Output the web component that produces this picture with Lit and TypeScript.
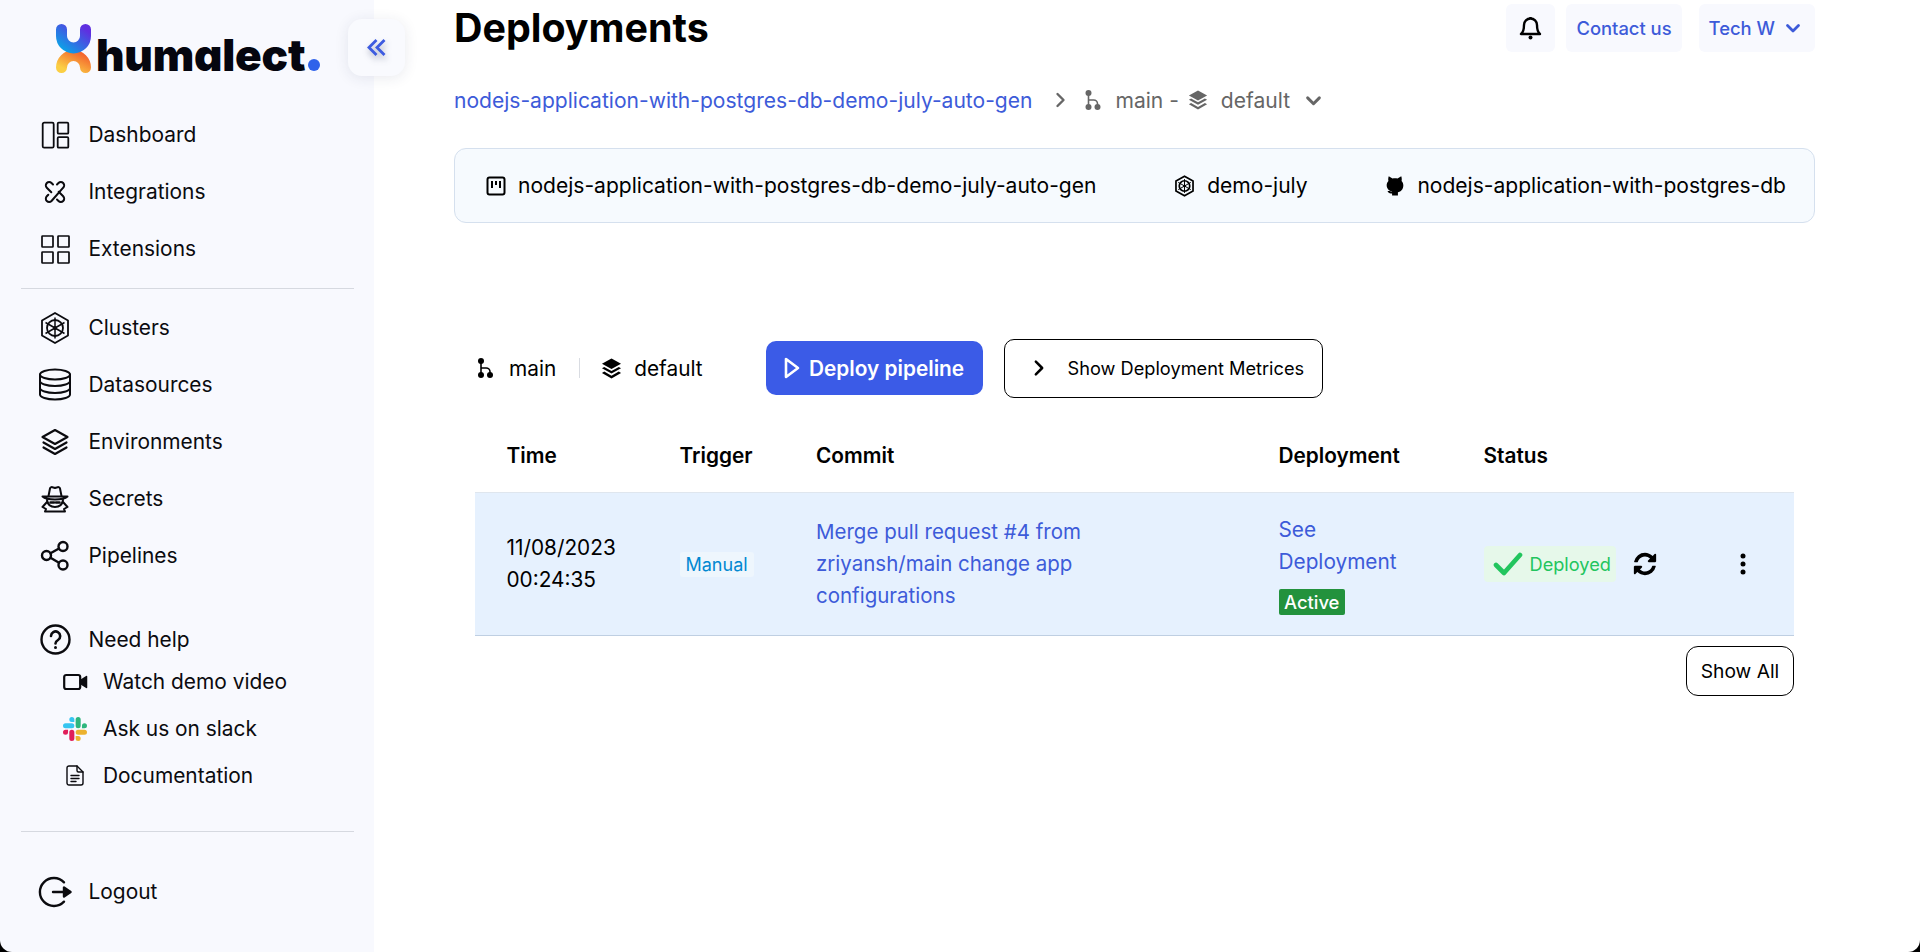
import { css, html, LitElement, svg } from "lit";
import { customElement } from "lit/decorators.js";

const stroke = (w: number, h: number, body: unknown, sw = 2) => html`<svg
    width=${w}
    height=${h}
    viewBox="0 0 ${w} ${h}"
    fill="none"
    stroke="currentColor"
    stroke-width=${sw}
    stroke-linecap="round"
    stroke-linejoin="round"
>
    ${body}
</svg>`;

const wheel = (sw: number) => svg`
    <path d="M16 1.5 29 9v15l-13 7.5L3 24V9z" stroke-width=${sw} />
    <circle cx="16" cy="16.5" r="8" stroke-width=${sw} />
    <circle cx="16" cy="16.5" r="2" fill="currentColor" stroke="none" />
    <path d="M16 6v21M6.5 11l19 11M25.5 11l-19 11" stroke-width="1.5" />`;

const branch = (w: number, h: number) => html`<svg width=${w} height=${h} viewBox="0 0 15 20" fill="currentColor">
    <circle cx="3" cy="3" r="3" />
    <circle cx="3" cy="17" r="3" />
    <circle cx="12" cy="17" r="3" />
    <path d="M2.2 3h1.6v6.2h4.4a4.6 4.6 0 0 1 4.6 4.6V17h-1.6v-3.2a3 3 0 0 0-3-3H3.8V17H2.2z" />
</svg>`;

const stackFilled = (w: number, h: number) => html`<svg width=${w} height=${h} viewBox="0 0 22 22" fill="currentColor">
    <path d="M11 .5 21 6l-10 5.5L1 6z" />
    <path d="M3.4 9.4 1 10.8l10 5.5 10-5.5-2.4-1.4-7.6 4.2z" />
    <path d="M3.4 14.2 1 15.6l10 5.9 10-5.9-2.4-1.4-7.6 4.4z" />
</svg>`;

const chevronDown = (w: number, color: string) => html`<svg
    width=${w}
    height=${w}
    viewBox="0 0 16 16"
    fill="none"
    stroke=${color}
    stroke-width="2.8"
    stroke-linecap="round"
    stroke-linejoin="round"
>
    <path d="m2.5 5.5 5.5 5.5 5.5-5.5" />
</svg>`;

const navIcons = {
    dashboard: stroke(
        30,
        28,
        svg`
        <rect x="2.7" y="1.7" width="11" height="25" rx="1.5" />
        <rect x="17.7" y="1.7" width="10.6" height="11" rx="1" />
        <rect x="17.7" y="16.2" width="10.6" height="10.5" rx="1" />`,
        1.8,
    ),
    integrations: stroke(
        24,
        24,
        svg`
        <path d="M10 4.5 8.5 3a3.3 3.3 0 0 0-4.7 4.7l4.5 4.5" />
        <path d="M14 19.5l1.5 1.5a3.3 3.3 0 0 0 4.7-4.7l-4.5-4.5" />
        <path d="M14 4.5 15.5 3a3.3 3.3 0 0 1 4.7 4.7L8.5 21a3.3 3.3 0 0 1-4.7-4.7l1.5-1.5" />`,
        2,
    ),
    extensions: stroke(
        30,
        30,
        svg`
        <rect x="2" y="2" width="11" height="11" rx=".5" />
        <rect x="18" y="2" width="11" height="11" rx=".5" />
        <rect x="2" y="18" width="11" height="11" rx=".5" />
        <rect x="18" y="18" width="11" height="11" rx=".5" />`,
        1.7,
    ),
    clusters: html`<svg width="32" height="36" viewBox="0 0 32 33" fill="none" stroke="currentColor" stroke-linejoin="round">
        ${wheel(1.8)}
    </svg>`,
    datasources: stroke(
        34,
        33,
        svg`
        <ellipse cx="17" cy="6.5" rx="15" ry="5" />
        <path d="M2 6.5v20c0 2.8 6.7 5 15 5s15-2.2 15-5v-20" />
        <path d="M2 13c0 2.8 6.7 5 15 5s15-2.2 15-5" />
        <path d="M2 20c0 2.8 6.7 5 15 5s15-2.2 15-5" />`,
    ),
    environments: stroke(
        30,
        28,
        svg`
        <path d="M15 2 27.5 9 15 16 2.5 9z" />
        <path d="M3.5 14.5 15 21l11.5-6.5" />
        <path d="M3.5 19.5 15 26l11.5-6.5" />`,
        2.2,
    ),
    secrets: stroke(
        30,
        28,
        svg`
        <path d="M8.5 11 10 3.5c.2-1 1.4-1.7 2.5-1.3l2.5.8 2.5-.8c1.1-.4 2.3.3 2.5 1.3l1.5 7.5" />
        <path d="M2.5 11.5h25c-2 1.8-6 3-12.5 3s-10.5-1.2-12.5-3z" />
        <path d="M7 15c.5 3 1.5 7 8 7s7.5-4 8-7" />
        <path d="M7 17 2.5 22l3.5 2-1 2.5h20l-1-2.5 3.5-2L23 17" />
        <path d="M10.5 17.5h3.5M16 17.5h3.5" stroke-width="2.5" />`,
    ),
    pipelines: stroke(
        30,
        31,
        svg`
        <circle cx="6.5" cy="15.5" r="4.5" />
        <circle cx="23" cy="6.5" r="4.5" />
        <circle cx="23" cy="25" r="4.5" />
        <path d="m10.5 13.3 8.500-4.800M10.5 17.7l8.500 5" />`,
        2.4,
    ),
    help: stroke(
        31,
        31,
        svg`
        <circle cx="15.5" cy="15.5" r="14" />
        <path d="M11 12a4.6 4.6 0 1 1 7 4c-1.7 1-2.5 1.8-2.5 3.5" stroke-width="2.6" />
        <circle cx="15.5" cy="23.5" r="1.5" fill="currentColor" stroke="none" />`,
        2.4,
    ),
    logout: stroke(
        34,
        32,
        svg`
        <path d="M26 6.3A14 14 0 1 0 26 25.7" />
        <path d="M15 16h17" />
        <path d="M32.5 16 26 11.5v9z" fill="currentColor" />`,
        2.4,
    ),
    video: stroke(
        25,
        18,
        svg`
        <rect x="1.2" y="2" width="16" height="14" rx="2" />
        <path d="M23.5 3.5v11l-6.300-4.200V7.700z" fill="currentColor" stroke-width="1.5" />`,
        2.2,
    ),
    slack: html`<svg width="24" height="24" viewBox="0 0 24 24">
        <path
            fill="#e01e5a"
            d="M5.042 15.165a2.528 2.528 0 0 1-2.52 2.523A2.528 2.528 0 0 1 0 15.165a2.527 2.527 0 0 1 2.522-2.52h2.52v2.52zM6.313 15.165a2.527 2.527 0 0 1 2.521-2.52 2.527 2.527 0 0 1 2.521 2.52v6.313A2.528 2.528 0 0 1 8.834 24a2.528 2.528 0 0 1-2.521-2.522v-6.313z"
        />
        <path
            fill="#36c5f0"
            d="M8.834 5.042a2.528 2.528 0 0 1-2.521-2.52A2.528 2.528 0 0 1 8.834 0a2.528 2.528 0 0 1 2.521 2.522v2.52H8.834zM8.834 6.313a2.528 2.528 0 0 1 2.521 2.521 2.528 2.528 0 0 1-2.521 2.521H2.522A2.528 2.528 0 0 1 0 8.834a2.528 2.528 0 0 1 2.522-2.521h6.312z"
        />
        <path
            fill="#2eb67d"
            d="M18.956 8.834a2.528 2.528 0 0 1 2.522-2.521A2.528 2.528 0 0 1 24 8.834a2.528 2.528 0 0 1-2.522 2.521h-2.522V8.834zM17.688 8.834a2.528 2.528 0 0 1-2.523 2.521 2.527 2.527 0 0 1-2.52-2.521V2.522A2.527 2.527 0 0 1 15.165 0a2.528 2.528 0 0 1 2.523 2.522v6.312z"
        />
        <path
            fill="#ecb22e"
            d="M15.165 18.956a2.528 2.528 0 0 1 2.523 2.522A2.528 2.528 0 0 1 15.165 24a2.527 2.527 0 0 1-2.52-2.522v-2.522h2.52zM15.165 17.688a2.527 2.527 0 0 1-2.52-2.523 2.526 2.526 0 0 1 2.52-2.52h6.313A2.527 2.527 0 0 1 24 15.165a2.528 2.528 0 0 1-2.522 2.523h-6.313z"
        />
    </svg>`,
    doc: stroke(
        18,
        21,
        svg`
        <path d="M3 1h8l6 6v11a2 2 0 0 1-2 2H3a2 2 0 0 1-2-2V3a2 2 0 0 1 2-2z" />
        <path d="M11 1v4.5a1.5 1.5 0 0 0 1.500 1.500H17" />
        <path d="M5 10.5h8M5 13.5h8M5 16.5h5" />`,
        1.4,
    ),
};

const mainNav = [
    { label: "Dashboard", icon: navIcons.dashboard },
    { label: "Integrations", icon: navIcons.integrations },
    { label: "Extensions", icon: navIcons.extensions },
];

const resourceNav = [
    { label: "Clusters", icon: navIcons.clusters },
    { label: "Datasources", icon: navIcons.datasources },
    { label: "Environments", icon: navIcons.environments },
    { label: "Secrets", icon: navIcons.secrets },
    { label: "Pipelines", icon: navIcons.pipelines },
];

const helpNav = [
    { label: "Watch demo video", icon: navIcons.video },
    { label: "Ask us on slack", icon: navIcons.slack },
    { label: "Documentation", icon: navIcons.doc },
];

@customElement("app-sidebar")
export class AppSidebar extends LitElement {
    static styles = css`
        :host {
            display: block;
            position: relative;
            width: 374px;
            flex: none;
            height: 952px;
            background: #f8f9fe;
            color: #0b0b0f;
            font-size: 20.9px;
            border-bottom-left-radius: 12px;
        }

        .brand {
            height: 106px;
            padding: 24px 0 0 56px;
            box-sizing: border-box;
            display: flex;
            align-items: flex-start;
        }

        .wordmark {
            display: flex;
            align-items: baseline;
            font-weight: 900;
            font-size: 44px;
            line-height: 49px;
            letter-spacing: -0.2px;
            margin: 7px 0 0 4px;
            color: #05060f;
            font-feature-settings: "cv11";
        }

        .dot {
            width: 12px;
            height: 12px;
            border-radius: 50%;
            background: #2f62ea;
            margin-left: 3px;
        }

        .collapse {
            position: absolute;
            left: 348px;
            top: 19px;
            width: 57px;
            height: 57px;
            border-radius: 14px;
            background: #f9fafe;
            box-shadow: 0 2px 14px rgba(40, 50, 90, 0.1);
            display: flex;
            align-items: center;
            justify-content: center;
            color: #3d5be0;
        }

        .collapse svg {
            filter: drop-shadow(1px 4px 3px rgba(40, 50, 90, 0.35));
        }

        .row {
            display: flex;
            align-items: center;
            height: 57px;
            padding-left: 36px;
            gap: 14.5px;
        }

        .icon {
            width: 38px;
            display: flex;
            justify-content: center;
            align-items: center;
        }

        .rule {
            height: 1px;
            background: #d6d9e0;
            margin: 0 20px 0 21px;
        }

        .rule.first {
            margin-top: 11px;
            margin-bottom: 10px;
        }

        .help {
            height: 37px;
            margin-top: 37px;
        }

        .sub {
            height: 47px;
            padding-left: 60px;
            gap: 13px;
        }

        .sub .icon {
            width: 30px;
        }

        .rule.second {
            margin-top: 32px;
            margin-bottom: 31px;
        }
    `;

    private row(item: { label: string; icon: unknown }, cls = "") {
        return html`<div class="row ${cls}">
            <span class="icon">${item.icon}</span><span>${item.label}</span>
        </div>`;
    }

    render() {
        return html`
            <div class="brand">
                <svg width="36" height="50" viewBox="56 24 36 50" fill="none" stroke-width="11" stroke-linecap="round">
                    <defs>
                        <linearGradient id="lo" x1="0" y1="1" x2="1" y2="0">
                            <stop offset="0" stop-color="#fbcf45" />
                            <stop offset="1" stop-color="#f4662e" />
                        </linearGradient>
                        <linearGradient id="lb" x1="0" y1="1" x2="1" y2="0">
                            <stop offset="0" stop-color="#0e9fe6" />
                            <stop offset="1" stop-color="#5f2fe0" />
                        </linearGradient>
                    </defs>
                    <path d="M61.5 67.5A12 12 0 0 1 85.5 67.5" stroke="url(#lo)" />
                    <path d="M61.5 29.5V36A12 12 0 0 0 85.5 36V29.5" stroke="url(#lb)" />
                </svg>
                <div class="wordmark">humalect<span class="dot"></span></div>
            </div>
            <div class="collapse">
                <svg width="22" height="22" viewBox="0 0 22 22" fill="none" stroke="currentColor" stroke-width="2.8">
                    <path d="M10.5 3 3 10.5l7.5 7.5" />
                    <path d="M18.5 3 11 10.5l7.5 7.5" />
                </svg>
            </div>
            ${mainNav.map((n) => this.row(n))}
            <div class="rule first"></div>
            ${resourceNav.map((n) => this.row(n))}
            ${this.row({ label: "Need help", icon: navIcons.help }, "help")}
            ${helpNav.map((n) => this.row(n, "sub"))}
            <div class="rule second"></div>
            ${this.row({ label: "Logout", icon: navIcons.logout })}
        `;
    }
}

@customElement("deploy-table")
export class DeployTable extends LitElement {
    static styles = css`
        :host {
            display: block;
            margin: 0 21px;
        }

        .head,
        .row {
            display: grid;
            grid-template-columns: 173px 136.5px 462.5px 205px 1fr;
            padding-left: 31.5px;
        }

        .head {
            height: 50px;
            align-items: center;
            margin: 32px 0 12px;
            font-weight: 600;
        }

        .row {
            height: 144px;
            box-sizing: border-box;
            align-items: center;
            background: #e6f1fe;
            border-top: 1px solid #dfe6ee;
            border-bottom: 1px solid #bfcfe2;
            line-height: 32px;
        }

        a {
            color: #3d5bd9;
            text-decoration: none;
        }

        .manual {
            justify-self: start;
            padding: 0 6px;
            height: 25px;
            line-height: 25px;
            font-size: 18px;
            background: #eef6fd;
            color: #0288d1;
            border-radius: 3px;
        }

        .commit {
            width: 310px;
            font-size: 20.5px;
        }

        .deployment {
            width: 150px;
        }

        .deployment a {
            display: block;
        }

        .active {
            display: block;
            width: fit-content;
            height: 26px;
            line-height: 26px;
            padding: 0 5.5px;
            margin-top: 11px;
            background: #23923d;
            color: #fff;
            font-size: 18.4px;
            font-weight: 500;
            border-radius: 2px;
        }

        .status {
            display: flex;
            align-items: center;
        }

        .badge {
            display: flex;
            align-items: center;
            gap: 7px;
            height: 36px;
            padding: 0 5px 0 9px;
            background: #e6f8ea;
            color: #22c55e;
            font-size: 18.2px;
            border-radius: 4px;
        }

        .sync {
            margin-left: 16px;
            color: #000;
            display: flex;
        }

        .kebab {
            margin-left: 82px;
            display: flex;
        }

        .foot {
            display: flex;
            justify-content: flex-end;
            margin-top: 10px;
        }

        .show-all {
            width: 108px;
            height: 50px;
            box-sizing: border-box;
            border: 1px solid #000;
            border-radius: 12px;
            background: #fff;
            font: inherit;
            font-size: 19.2px;
            color: #000;
            padding: 0;
        }
    `;

    render() {
        return html`
            <div class="head">
                <span>Time</span><span>Trigger</span><span>Commit</span><span>Deployment</span><span>Status</span>
            </div>
            <div class="row">
                <div>11/08/2023<br />00:24:35</div>
                <span class="manual">Manual</span>
                <a class="commit" href="#">Merge pull request #4 from zriyansh/main change app configurations</a>
                <div class="deployment">
                    <a href="#">See Deployment</a>
                    <span class="active">Active</span>
                </div>
                <div class="status">
                    <span class="badge">
                        <svg width="30" height="24" viewBox="0 0 30 24" fill="none" stroke="#22c55e" stroke-width="4.6" stroke-linecap="round" stroke-linejoin="round">
                            <path d="m3 13 8 8L27 3" />
                        </svg>
                        Deployed
                    </span>
                    <span class="sync">
                        <svg width="26" height="26" viewBox="0 0 1792 1792" fill="currentColor">
                            <path d="M1639 1056q0 5-1 7-64 268-268 434.5t-478 166.5q-146 0-282.5-55t-243.5-157l-129 129q-19 19-45 19t-45-19-19-45v-448q0-26 19-45t45-19h448q26 0 45 19t19 45-19 45l-137 137q71 66 161 102t187 36q134 0 250-65t186-179q11-17 53-117 8-23 30-23h192q13 0 22.5 9.5t9.5 22.5zm25-800v448q0 26-19 45t-45 19h-448q-26 0-45-19t-19-45 19-45l138-138q-148-137-349-137-134 0-250 65t-186 179q-11 17-53 117-8 23-30 23h-199q-13 0-22.5-9.5t-9.5-22.5v-7q65-268 270-434.5t480-166.5q146 0 284 55.5t245 156.5l130-129q19-19 45-19t45 19 19 45z" />
                        </svg>
                    </span>
                    <span class="kebab">
                        <svg width="6" height="24" viewBox="0 0 6 24" fill="#000">
                            <circle cx="3" cy="4" r="2.5" />
                            <circle cx="3" cy="12" r="2.5" />
                            <circle cx="3" cy="20" r="2.5" />
                        </svg>
                    </span>
                </div>
            </div>
            <div class="foot"><button class="show-all">Show All</button></div>
        `;
    }
}

@customElement("app-root")
export class AppRoot extends LitElement {
    static styles = css`
        :host {
            display: flex;
            height: 952px;
            overflow: hidden;
            background: #000;
            font-family: Inter, "Liberation Sans", sans-serif;
            font-size: 20.8px;
            color: #000;
        }

        main {
            flex: 1;
            min-width: 0;
            padding: 0 105px 0 80px;
            background: #fff;
            border-bottom-right-radius: 12px;
        }

        header {
            display: flex;
            height: 56px;
            justify-content: space-between;
            align-items: flex-start;
        }

        h1 {
            margin: 0;
            font-size: 39.4px;
            line-height: 56px;
            font-weight: 700;
        }

        .top-actions {
            display: flex;
            gap: 11px;
            margin-top: 4px;
        }

        .pill {
            height: 48px;
            display: flex;
            align-items: center;
            padding: 0 10px;
            background: #f8f9fe;
            border-radius: 6px;
            font-size: 18.4px;
            font-weight: 500;
            color: #3d5bd9;
            gap: 10px;
        }

        .pill.bell {
            padding: 0 13px;
            color: #000;
        }

        .pill.user {
            margin-left: 6px;
            padding-right: 14px;
        }

        .crumbs {
            display: flex;
            align-items: center;
            height: 32px;
            margin-top: 28px;
            font-size: 21.05px;
            color: #666;
        }

        .crumbs a {
            color: #3d5bd9;
            text-decoration: none;
        }

        .crumbs .sep {
            margin: 0 19px 0 23px;
            display: flex;
        }

        .crumbs .main-txt {
            margin: 0 9px 0 14px;
        }

        .crumbs .default-txt {
            margin: 0 15px 0 13px;
        }

        .info {
            display: flex;
            align-items: center;
            height: 75px;
            box-sizing: border-box;
            margin-top: 32px;
            padding: 0 28px 0 31px;
            background: #f6fafe;
            border: 1px solid #d5e0ee;
            border-radius: 12px;
            justify-content: space-between;
            font-size: 21.05px;
        }

        .info > div {
            display: flex;
            align-items: center;
            gap: 12px;
        }

        .toolbar {
            display: flex;
            align-items: center;
            height: 60px;
            margin: 115px 21px 0;
            padding-left: 3px;
        }

        .tag {
            display: flex;
            align-items: center;
            gap: 16px;
        }

        .tag.stack {
            gap: 12px;
        }

        .divider {
            width: 1px;
            height: 20px;
            background: #d9dce2;
            margin: 0 21px 0 23px;
        }

        .deploy {
            margin-left: 63px;
            width: 217px;
            height: 54px;
            border: 0;
            border-radius: 10px;
            background: #3b5be7;
            color: #fff;
            font: inherit;
            font-weight: 600;
            display: flex;
            align-items: center;
            justify-content: center;
            gap: 9px;
            padding: 0;
        }

        .metrics {
            margin-left: 21px;
            width: 319px;
            height: 59px;
            box-sizing: border-box;
            border: 1px solid #000;
            border-radius: 10px;
            background: #fff;
            font: inherit;
            font-size: 18.2px;
            color: #000;
            display: flex;
            align-items: center;
            padding: 0 0 0 28px;
            gap: 23px;
        }
    `;

    render() {
        return html`
            <app-sidebar></app-sidebar>
            <main>
                <header>
                    <h1>Deployments</h1>
                    <div class="top-actions">
                        <div class="pill bell">
                            <svg width="23" height="24" viewBox="0 0 23 24" fill="none" stroke="currentColor" stroke-width="2.4" stroke-linejoin="round">
                                <path d="M11.5 2.500a6.500 6.500 0 0 0-6.500 6.500c0 5-1 7.500-3 9h19c-2-1.500-3-4-3-9a6.500 6.500 0 0 0-6.500-6.500z" />
                                <path d="M11.5 1v1.500" />
                                <circle cx="11.5" cy="21.5" r="2" fill="currentColor" stroke="none" />
                            </svg>
                        </div>
                        <div class="pill">Contact us</div>
                        <div class="pill user">Tech W ${chevronDown(16, "#3d5bd9")}</div>
                    </div>
                </header>

                <div class="crumbs">
                    <a href="#">nodejs-application-with-postgres-db-demo-july-auto-gen</a>
                    <span class="sep">
                        <svg width="11" height="16" viewBox="0 0 11 16" fill="none" stroke="#666" stroke-width="2.4" stroke-linecap="round" stroke-linejoin="round">
                            <path d="m2.5 2 6 6-6 6" />
                        </svg>
                    </span>
                    ${branch(16, 20)}
                    <span class="main-txt">main -</span>
                    ${stackFilled(20, 20)}
                    <span class="default-txt">default</span>
                    ${chevronDown(17, "#666")}
                </div>

                <div class="info">
                    <div>
                        <svg width="20" height="20" viewBox="0 0 20 20" fill="none" stroke="#000" stroke-width="2">
                            <rect x="1.5" y="1.5" width="17" height="17" rx="2" />
                            <path d="M6 5v7M10 5v4M14 5v7" />
                        </svg>
                        <span>nodejs-application-with-postgres-db-demo-july-auto-gen</span>
                    </div>
                    <div>
                        <svg width="21" height="24" viewBox="0 0 32 33" fill="none" stroke="#000" color="#000">${wheel(2.6)}</svg>
                        <span>demo-july</span>
                    </div>
                    <div>
                        <svg width="20" height="21" viewBox="0 0 24 24" fill="#000">
                            <path d="M4.5 1 9 3.600c2-.5 4-.5 6 0L19.500 1c.7 2.200.8 4 .4 5.500 1.400 1.500 2.100 3.300 2.100 5.300 0 5-3 7.700-6.500 8.400V24h-7v-2.500c-3 .6-4.600-.6-5.500-2.800h3c.5.700 1.300 1 2.500.7v-.1C5 18.600 2 16 2 11.800c0-2 .7-3.800 2.100-5.300C3.700 5 3.800 3.200 4.500 1z" />
                        </svg>
                        <span>nodejs-application-with-postgres-db</span>
                    </div>
                </div>

                <div class="toolbar">
                    <div class="tag">${branch(15, 20)}<span>main</span></div>
                    <span class="divider"></span>
                    <div class="tag stack">${stackFilled(21, 21)}<span>default</span></div>
                    <button class="deploy">
                        <svg width="16" height="22" viewBox="0 0 16 22" fill="none" stroke="#fff" stroke-width="2.6" stroke-linejoin="round">
                            <path d="M2 2v18l12-9z" />
                        </svg>
                        Deploy pipeline
                    </button>
                    <button class="metrics">
                        <svg width="12" height="18" viewBox="0 0 12 20" fill="none" stroke="#000" stroke-width="2.8" stroke-linecap="round" stroke-linejoin="round">
                            <path d="m2.5 3 7 7-7 7" />
                        </svg>
                        Show Deployment Metrices
                    </button>
                </div>

                <deploy-table></deploy-table>
            </main>
        `;
    }
}
